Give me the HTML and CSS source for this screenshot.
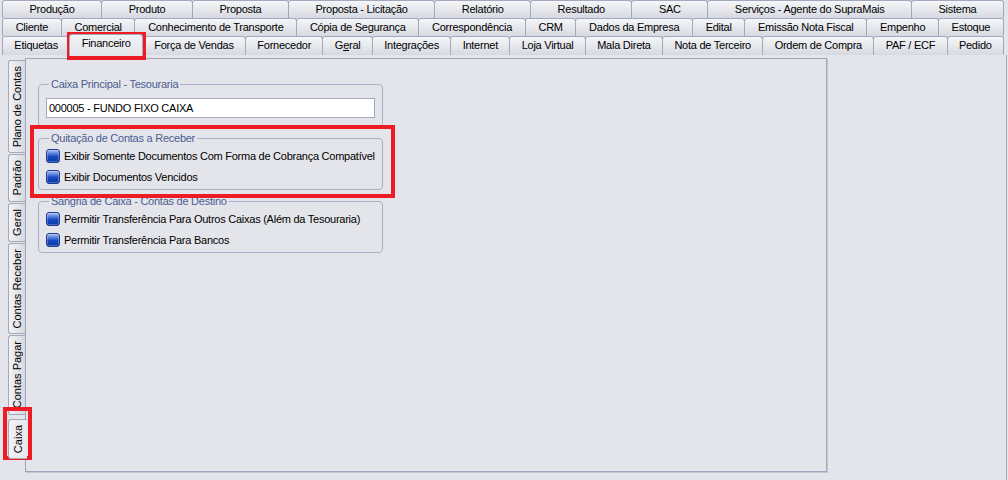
FILE: index.html
```html
<!DOCTYPE html>
<html lang="pt-BR">
<head>
    <meta charset="UTF-8">
    <title>Configurações - Financeiro</title>
    <link rel="stylesheet" href="styles.css">
</head>
<body>
    <div class="tabrows">
        <div class="tabrow">
            <div class="tab">Produção</div>
            <div class="tab">Produto</div>
            <div class="tab">Proposta</div>
            <div class="tab">Proposta - Licitação</div>
            <div class="tab">Relatório</div>
            <div class="tab">Resultado</div>
            <div class="tab">SAC</div>
            <div class="tab">Serviços - Agente do SupraMais</div>
            <div class="tab">Sistema</div>
        </div>
        <div class="tabrow">
            <div class="tab">Cliente</div>
            <div class="tab">Comercial</div>
            <div class="tab">Conhecimento de Transporte</div>
            <div class="tab">Cópia de Segurança</div>
            <div class="tab">Correspondência</div>
            <div class="tab">CRM</div>
            <div class="tab">Dados da Empresa</div>
            <div class="tab">Edital</div>
            <div class="tab">Emissão Nota Fiscal</div>
            <div class="tab">Empenho</div>
            <div class="tab">Estoque</div>
        </div>
        <!-- a linha da aba selecionada fica colada na página -->
        <div class="tabrow tabrow-last">
            <div class="tab">Etiquetas</div>
            <div class="tab tab-active">Financeiro</div>
            <div class="tab">Força de Vendas</div>
            <div class="tab">Fornecedor</div>
            <div class="tab">G<u>e</u>ral</div>
            <div class="tab">Integrações</div>
            <div class="tab">Internet</div>
            <div class="tab">Loja Virtual</div>
            <div class="tab">Mala Direta</div>
            <div class="tab">Nota de Terceiro</div>
            <div class="tab">Ordem de Compra</div>
            <div class="tab">PAF / ECF</div>
            <div class="tab">Pedido</div>
        </div>
    </div>

    <div class="sheet">
        <div class="sidetabs">
            <div class="vtab"><span>Plano de Contas</span></div>
            <div class="vtab"><span>Padrão</span></div>
            <div class="vtab"><span>Geral</span></div>
            <div class="vtab"><span>Contas Receber</span></div>
            <div class="vtab"><span>Contas Pagar</span></div>
            <div class="vtab vtab-active"><span>Caixa</span></div>
        </div>

        <div class="panel">
            <fieldset class="group group-caixa">
                <legend>Caixa Principal - Tesouraria</legend>
                <div class="edit">000005 - FUNDO FIXO CAIXA</div>
            </fieldset>

            <fieldset class="group">
                <legend>Quitação de Contas a Receber</legend>
                <div class="check"><span class="box"></span>Exibir Somente Documentos Com Forma de Cobrança Compatível</div>
                <div class="check"><span class="box"></span>Exibir Documentos Vencidos</div>
            </fieldset>

            <fieldset class="group">
                <legend>Sangria de Caixa - Contas de Destino</legend>
                <div class="check"><span class="box"></span>Permitir Transferência Para Outros Caixas (Além da Tesouraria)</div>
                <div class="check"><span class="box"></span>Permitir Transferência Para Bancos</div>
            </fieldset>
        </div>
    </div>

    <!-- marcações vermelhas por cima da tela -->
    <div class="mark mark-financeiro"></div>
    <div class="mark mark-quitacao"></div>
    <div class="mark mark-caixa"></div>
</body>
</html>
```

FILE: styles.css
```css
/* 
    Tela de configurações (estilo Delphi / tema cinza-azulado)
        * abas em várias linhas esticadas até a largura total
        * abas verticais à esquerda da página
*/
body {
    margin: 0;
    width: 1008px;
    height: 480px;
    overflow: hidden;
    position: relative;
    background-color: #e4e5ea;
    font-family: "Liberation Sans", Arial, sans-serif;
    font-size: 11px;
    letter-spacing: -0.25px;
    color: #000;
}

/* abas do topo */
.tabrows {
    padding: 0 4px 0 2px;
}

.tabrow {
    display: flex;
    height: 18px;
}

.tabrow-last {
    height: 19px;
}

.tab {
    flex: 1 1 auto;
    padding: 0 4px;
    margin-left: -1px;
    border: 1px solid #a3a8bc;
    border-bottom: 0;
    border-radius: 3px 3px 0 0;
    background: linear-gradient(#f5f6f8, #d7d9e1);
    text-align: center;
    line-height: 17px;
    white-space: nowrap;
}

.tab:first-child {
    margin-left: 0;
}

.tab u {
    text-decoration-thickness: 1px;
    text-underline-offset: 1px;
}

.tab-active {
    position: relative;
    z-index: 2;
    margin-top: -2px;
    height: 21px;
    background: linear-gradient(#f1f2f5, #e4e5ea);
}

/* página */
.sheet {
    display: flex;
    height: 425px;
    width: 1007px;
    padding: 3px 0 0 8px;
    box-sizing: border-box;
    border-right: 1px solid #a3a8bc;
}

.sidetabs {
    width: 17px;
    padding-top: 2px;
    display: flex;
    flex-direction: column;
}

.vtab {
    display: flex;
    justify-content: center;
    margin-bottom: 1px;
    padding: 5px 0;
    border: 1px solid #a3a8bc;
    border-right: 0;
    border-radius: 3px 0 0 3px;
    background: linear-gradient(to right, #f2f3f6, #d7d9e1);
}

.vtab span {
    writing-mode: vertical-rl;
    transform: rotate(180deg);
    line-height: 15px;
    letter-spacing: 0;
    white-space: nowrap;
}

.vtab-active {
    position: relative;
    z-index: 2;
    margin-top: 3px;
    margin-right: -2px;
    background: linear-gradient(to right, #f1f2f5, #e7e8ec);
}

.panel {
    width: 802px;
    height: 414px;
    box-sizing: border-box;
    padding: 19px 0 0 12px;
    border: 1px solid #9ea4bc;
    box-shadow: 1px 1px 0 #c3c7d5;
}

/* grupos */
.group {
    width: 345px;
    box-sizing: border-box;
    margin: 0 0 5px 0;
    padding: 0 7px 2px 7px;
    border: 1px solid #a9b0c8;
    border-radius: 4px;
}

.group legend {
    margin-left: 3px;
    padding: 0 2px;
    line-height: 13px;
    color: #4b5d91;
}

.group-caixa {
    padding-top: 7px;
    padding-bottom: 8px;
}

.edit {
    height: 20px;
    box-sizing: border-box;
    padding-left: 2px;
    border: 1px solid #a2a9c1;
    background-color: #fff;
    line-height: 18px;
}

.check {
    display: flex;
    align-items: center;
    height: 21px;
    white-space: nowrap;
}

.box {
    width: 14px;
    height: 14px;
    margin-right: 4px;
    box-sizing: border-box;
    border: 1px solid #1d3a8e;
    border-radius: 3px;
    background: linear-gradient(#a9bff0 0%, #4a74d6 35%, #1648c0 55%, #0b3aa6 100%);
    box-shadow: inset 0 0 0 1px rgba(255, 255, 255, 0.25);
}

/* marcações */
.mark {
    position: absolute;
    box-sizing: border-box;
    border: 4px solid #ed1c24;
}

.mark-financeiro {
    left: 67px;
    top: 32px;
    width: 79px;
    height: 28px;
}

.mark-quitacao {
    left: 30px;
    top: 125px;
    width: 365px;
    height: 73px;
}

.mark-caixa {
    left: 3px;
    top: 407px;
    width: 29px;
    height: 53px;
}
```
